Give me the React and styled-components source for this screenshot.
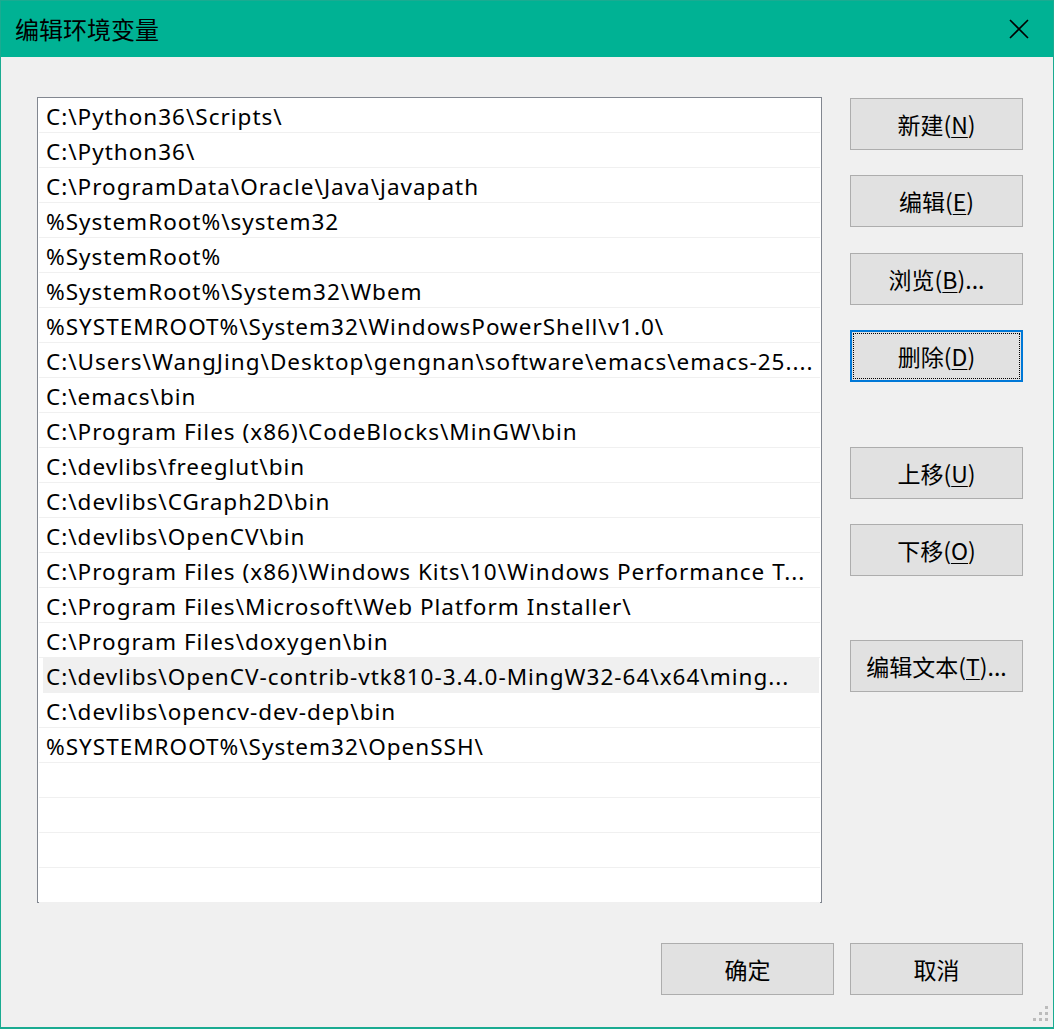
import styled, { createGlobalStyle, css } from 'styled-components'

const GlobalStyle = createGlobalStyle`
  html, body {
    margin: 0;
    padding: 0;
    background: #f0f0f0;
  }
  * { box-sizing: border-box; }
`

const paths = [
  'C:\\Python36\\Scripts\\',
  'C:\\Python36\\',
  'C:\\ProgramData\\Oracle\\Java\\javapath',
  '%SystemRoot%\\system32',
  '%SystemRoot%',
  '%SystemRoot%\\System32\\Wbem',
  '%SYSTEMROOT%\\System32\\WindowsPowerShell\\v1.0\\',
  'C:\\Users\\WangJing\\Desktop\\gengnan\\software\\emacs\\emacs-25....',
  'C:\\emacs\\bin',
  'C:\\Program Files (x86)\\CodeBlocks\\MinGW\\bin',
  'C:\\devlibs\\freeglut\\bin',
  'C:\\devlibs\\CGraph2D\\bin',
  'C:\\devlibs\\OpenCV\\bin',
  'C:\\Program Files (x86)\\Windows Kits\\10\\Windows Performance T...',
  'C:\\Program Files\\Microsoft\\Web Platform Installer\\',
  'C:\\Program Files\\doxygen\\bin',
  'C:\\devlibs\\OpenCV-contrib-vtk810-3.4.0-MingW32-64\\x64\\ming...',
  'C:\\devlibs\\opencv-dev-dep\\bin',
  '%SYSTEMROOT%\\System32\\OpenSSH\\',
  '',
  '',
  '',
  '',
]

const SELECTED = 16

const Window = styled.div`
  position: relative;
  width: 1054px;
  height: 1029px;
  border: 1px solid #1aab91;
  border-bottom-width: 2px;
  background: #f0f0f0;
  display: flex;
  flex-direction: column;
  font-family: "Noto Sans", "Noto Sans CJK SC", sans-serif;
  color: #000;
`

const TitleBar = styled.div`
  height: 56px;
  background: #00b294;
  display: flex;
  align-items: center;
  justify-content: space-between;
  padding: 0 14px 0 14px;
`

const Title = styled.div`
  font-family: "Noto Sans CJK SC", sans-serif;
  font-size: 24px;
  padding-bottom: 1px;
`

const CloseButton = styled.div`
  width: 48px;
  height: 40px;
  display: flex;
  align-items: center;
  justify-content: flex-end;
  padding-right: 10px;
`

const Body = styled.div`
  flex: 1;
  display: flex;
  flex-direction: column;
  padding: 40px 30px 0 36px;
`

const Main = styled.div`
  display: flex;
  gap: 28px;
`

const List = styled.div`
  width: 785px;
  height: 806px;
  border: 1px solid #828790;
  background: #fff;
  padding: 0 1px;
  display: flex;
  flex-direction: column;
`

const Row = styled.div`
  height: 35px;
  flex: none;
  border-bottom: 1px solid #f0f0f0;
  display: flex;
  align-items: center;
  padding: 3px 0 0 7px;
  font-size: 22.5px;
  letter-spacing: 1px;
  white-space: nowrap;
  overflow: hidden;
  ${(p) => p.$selected && css`
    background: #f0f0f0;
    margin-left: 4px;
    margin-right: 1px;
    padding-left: 3px;
  `}
`

const Side = styled.div`
  display: flex;
  flex-direction: column;
`

const Button = styled.div`
  width: 173px;
  height: 52px;
  flex: none;
  background: #e1e1e1;
  border: 1px solid #adadad;
  display: flex;
  align-items: center;
  justify-content: center;
  font-family: "Noto Sans CJK SC", sans-serif;
  font-size: 23px;
  margin-top: ${(p) => p.$gap || 0}px;
  u { text-underline-offset: 3px; text-decoration-thickness: 1px; }
  ${(p) => p.$focused && css`
    border: 2px solid #0078d7;
    outline: 1px dotted #000;
    outline-offset: -4px;
  `}
`

const Footer = styled.div`
  display: flex;
  justify-content: flex-end;
  gap: 16px;
  margin-top: 40px;
`

const Grip = styled.div`
  position: absolute;
  right: 5px;
  bottom: 6px;
  display: grid;
  grid-template-columns: repeat(3, 3px);
  grid-template-rows: repeat(3, 3px);
  gap: 3px;
  span { background: #bcbcbc; }
`

const Label = ({ text, k, tail = '' }) => (
  <span>
    {text}(<u>{k}</u>){tail}
  </span>
)

export default function App() {
  return (
    <>
      <GlobalStyle />
      <Window>
        <TitleBar>
          <Title>编辑环境变量</Title>
          <CloseButton>
            <svg width="20" height="20" viewBox="0 0 20 20">
              <path d="M1 1 L19 19 M19 1 L1 19" stroke="#000" strokeWidth="1.6" />
            </svg>
          </CloseButton>
        </TitleBar>
        <Body>
          <Main>
            <List>
              {paths.map((p, i) => (
                <Row key={i} $selected={i === SELECTED}>
                  {p}
                </Row>
              ))}
            </List>
            <Side>
              <Button $gap={1}><Label text="新建" k="N" /></Button>
              <Button $gap={25}><Label text="编辑" k="E" /></Button>
              <Button $gap={26}><Label text="浏览" k="B" tail="..." /></Button>
              <Button $gap={25} $focused><Label text="删除" k="D" /></Button>
              <Button $gap={65}><Label text="上移" k="U" /></Button>
              <Button $gap={25}><Label text="下移" k="O" /></Button>
              <Button $gap={64}><Label text="编辑文本" k="T" tail="..." /></Button>
            </Side>
          </Main>
          <Footer>
            <Button>确定</Button>
            <Button>取消</Button>
          </Footer>
        </Body>
        <Grip>
          <i />
          <i />
          <span />
          <i />
          <span />
          <span />
          <span />
          <span />
          <span />
        </Grip>
      </Window>
    </>
  )
}
